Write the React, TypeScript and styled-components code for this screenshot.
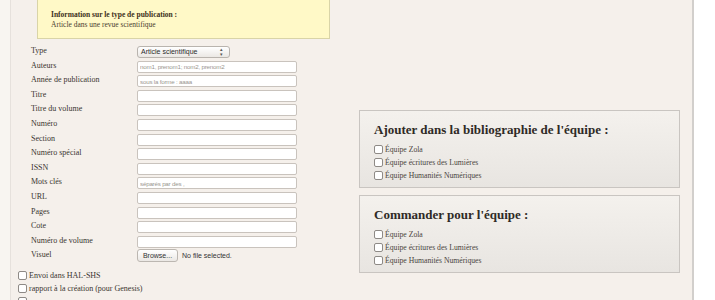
import styled, { createGlobalStyle } from "styled-components";

const GlobalStyle = createGlobalStyle`
  html, body {
    margin: 0;
    padding: 0;
    background: #ffffff;
  }
  body {
    font-family: "Liberation Serif", "Times New Roman", serif;
    color: #3a3530;
  }
`;

const fields = [
  { label: "Type", kind: "select" },
  { label: "Auteurs", placeholder: "nom1, prenom1; nom2, prenom2" },
  { label: "Année de publication", placeholder: "sous la forme : aaaa" },
  { label: "Titre" },
  { label: "Titre du volume" },
  { label: "Numéro" },
  { label: "Section" },
  { label: "Numéro spécial" },
  { label: "ISSN" },
  { label: "Mots clés", placeholder: "séparés par des ," },
  { label: "URL" },
  { label: "Pages" },
  { label: "Cote" },
  { label: "Numéro de volume" },
  { label: "Visuel", kind: "file" },
];

const teams = [
  "Équipe Zola",
  "Équipe écritures des Lumières",
  "Équipe Humanités Numériques",
];

function TeamBox({ title }: { title: string }) {
  return (
    <Box>
      <BoxTitle>{title}</BoxTitle>
      {teams.map((t) => (
        <TeamRow key={t}>
          <Check />
          <span>{t}</span>
        </TeamRow>
      ))}
    </Box>
  );
}

function App() {
  return (
    <>
      <GlobalStyle />
      <Page>
        <Panel>
          <LeftColumn>
            <InfoBox>
              <InfoTitle>Information sur le type de publication :</InfoTitle>
              <InfoText>Article dans une revue scientifique</InfoText>
            </InfoBox>
            <Form>
              {fields.map((f) => (
                <Row key={f.label}>
                  <Label>{f.label}</Label>
                  {f.kind === "select" ? (
                    <SelectBox>
                      Article scientifique
                      <Arrows>
                        <span>▴</span>
                        <span>▾</span>
                      </Arrows>
                    </SelectBox>
                  ) : f.kind === "file" ? (
                    <FileRow>
                      <BrowseButton>Browse...</BrowseButton>
                      <FileText>No file selected.</FileText>
                    </FileRow>
                  ) : (
                    <TextInput placeholder={f.placeholder} />
                  )}
                </Row>
              ))}
            </Form>
            <Options>
              <OptionRow>
                <Check />
                <span>Envoi dans HAL-SHS</span>
              </OptionRow>
              <OptionRow>
                <Check />
                <span>rapport à la création (pour Genesis)</span>
              </OptionRow>
              <OptionRow>
                <Check />
                <span></span>
              </OptionRow>
            </Options>
          </LeftColumn>
          <RightColumn>
            <TeamBox title="Ajouter dans la bibliographie de l'équipe :" />
            <TeamBox title="Commander pour l'équipe :" />
          </RightColumn>
        </Panel>
      </Page>
    </>
  );
}

const Page = styled.div`
  display: flex;
  min-height: 300px;
  background: #f8f5f1;
  padding-left: 10px;
  width: 684px;
`;

const Panel = styled.div`
  display: flex;
  flex: 1;
  background: #f5f0eb;
  border-left: 1px solid #e6e1dc;
  border-right: 2px solid #d2cfcc;
`;

const LeftColumn = styled.div`
  width: 340px;
  padding-left: 7px;
`;

const InfoBox = styled.div`
  box-sizing: border-box;
  margin: -4px 0 0 19px;
  width: 293px;
  height: 43px;
  padding: 11px 0 0 13px;
  background: #fff9c7;
  border: 1px solid #d9d4a7;
`;

const InfoTitle = styled.div`
  font-size: 7.5px;
  font-weight: bold;
  color: #3d3020;
  line-height: 10px;
  margin-top: 2px;
`;

const InfoText = styled.div`
  font-size: 7.5px;
  color: #4a4030;
  line-height: 10px;
`;

const Form = styled.div`
  display: flex;
  flex-direction: column;
  gap: 2.6px;
  margin-top: 7px;
  padding-left: 13px;
`;

const Row = styled.div`
  display: grid;
  grid-template-columns: 106px 160px;
  align-items: start;
  height: 12px;
`;

const Label = styled.div`
  font-size: 8px;
  line-height: 10px;
  color: #3a3530;
`;

const TextInput = styled.input`
  box-sizing: border-box;
  height: 12px;
  width: 160px;
  padding: 0 2px;
  border: 1px solid #c9c3bd;
  border-radius: 2px;
  background: #ffffff;
  font-family: "Liberation Sans", Arial, sans-serif;
  font-size: 6.2px;
  letter-spacing: -0.2px;
  outline: none;
  &::placeholder {
    color: #9a9690;
  }
`;

const SelectBox = styled.div`
  position: relative;
  box-sizing: border-box;
  width: 93px;
  height: 12px;
  padding-left: 3px;
  border: 1px solid #b9b4ae;
  border-radius: 3px;
  background: linear-gradient(#ffffff, #ebe8e4);
  font-family: "Liberation Sans", Arial, sans-serif;
  font-size: 7px;
  line-height: 10px;
  color: #2a2a2a;
`;

const Arrows = styled.span`
  position: absolute;
  right: 6px;
  top: 0;
  display: flex;
  flex-direction: column;
  font-size: 5px;
  line-height: 4.5px;
  color: #555;
`;

const FileRow = styled.div`
  display: flex;
  align-items: center;
  gap: 4px;
  margin-top: -1px;
`;

const BrowseButton = styled.div`
  box-sizing: border-box;
  width: 41px;
  height: 13px;
  border: 1px solid #bcb7b1;
  border-radius: 3px;
  background: linear-gradient(#ffffff, #ebe8e4);
  font-family: "Liberation Sans", Arial, sans-serif;
  font-size: 7px;
  line-height: 11px;
  text-align: center;
  color: #333;
`;

const FileText = styled.span`
  font-family: "Liberation Sans", Arial, sans-serif;
  font-size: 7px;
  color: #333;
`;

const Options = styled.div`
  display: flex;
  flex-direction: column;
  gap: 4px;
  margin-top: 9px;
`;

const OptionRow = styled.label`
  display: flex;
  align-items: center;
  gap: 2px;
  font-size: 8px;
  color: #3a3530;
  height: 9px;
`;

const Check = styled.span`
  display: inline-block;
  box-sizing: border-box;
  width: 9px;
  height: 9px;
  border: 1px solid #8e8a86;
  border-radius: 2px;
  background: #ffffff;
  flex-shrink: 0;
`;

const RightColumn = styled.div`
  display: flex;
  flex-direction: column;
  gap: 7px;
  padding-top: 110px;
  margin-left: 1px;
`;

const Box = styled.div`
  box-sizing: border-box;
  width: 321px;
  height: 78px;
  padding: 12px 0 0 14px;
  border: 1px solid #c9c5c1;
  background: linear-gradient(#f4f1ed, #e8e5e1);
`;

const BoxTitle = styled.div`
  font-size: 13px;
  font-weight: bold;
  color: #2f2a26;
  line-height: 14px;
  margin-bottom: 6px;
`;

const TeamRow = styled.label`
  display: flex;
  align-items: center;
  gap: 2px;
  height: 13px;
  font-size: 7.7px;
  color: #4a4540;
`;

export default App;
